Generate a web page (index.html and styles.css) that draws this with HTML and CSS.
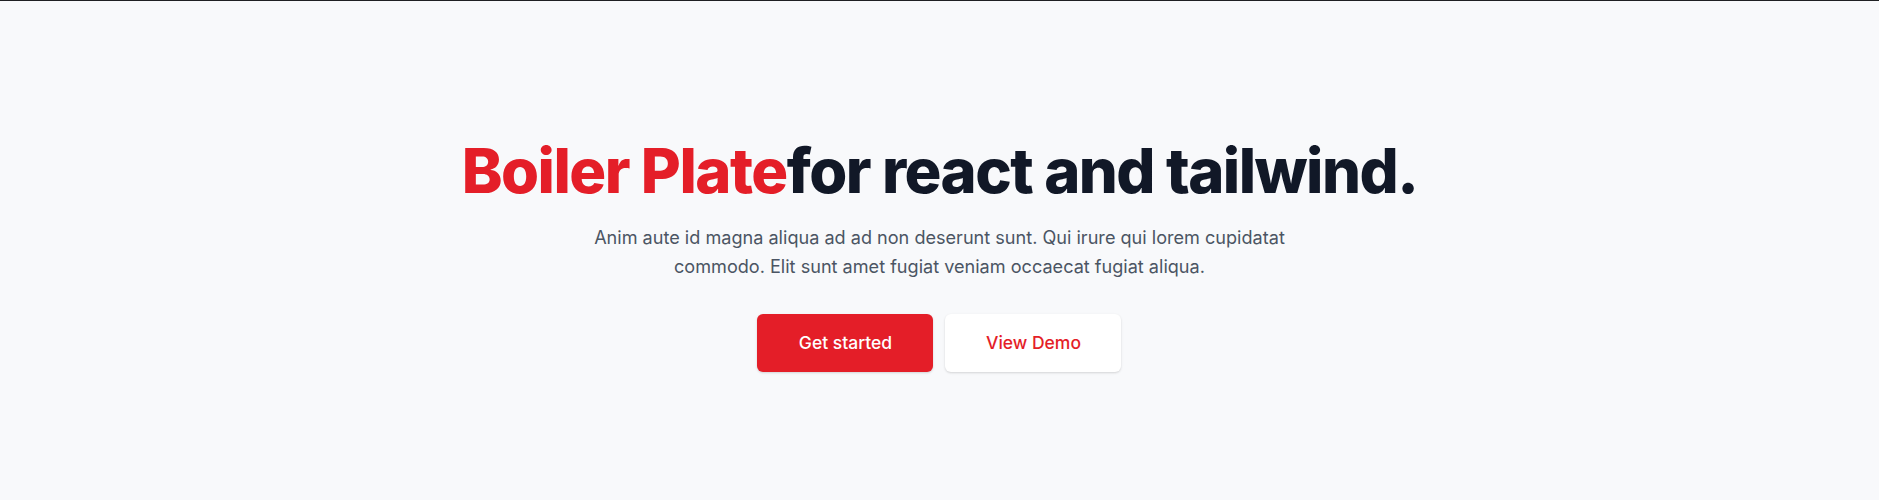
FILE: index.html
```html
<!DOCTYPE html>
<html lang="en">
<head>
<meta charset="utf-8">
<title>Boiler Plate</title>
<link rel="stylesheet" href="styles.css">
</head>
<body>
<main class="hero">
  <div class="hero-inner">
    <h1 class="title"><span class="accent">Boiler Plate</span>for react and tailwind.</h1>
    <p class="lead">Anim aute id magna aliqua ad ad non deserunt sunt. Qui irure qui lorem cupidatat commodo. Elit sunt amet fugiat veniam occaecat fugiat aliqua.</p>
    <div class="actions">
      <a class="btn btn-primary" href="#">Get started</a>
      <a class="btn btn-secondary" href="#">View Demo</a>
    </div>
  </div>
</main>
</body>
</html>
```
FILE: styles.css
```css
* { box-sizing: border-box; }
html, body { margin: 0; padding: 0; }
body {
  font-family: Inter, "Noto Sans", sans-serif;
  background: #f8f9fb;
  border-top: 1px solid #1f2023;
}
.hero {
  height: 499px;
  display: flex;
  align-items: center;
  justify-content: center;
}
.hero-inner {
  display: flex;
  flex-direction: column;
  align-items: center;
  text-align: center;
  padding-top: 10px;
}
.title {
  margin: 0;
  font-size: 61.5px;
  line-height: 1;
  font-weight: 800;
  letter-spacing: -0.025em;
  color: #111827;
}
.accent { color: #e41e28; }
.lead {
  margin: 22px 0 0;
  max-width: 710px;
  font-size: 18.1px;
  line-height: 29.25px;
  color: #4b5563;
}
.actions {
  margin-top: 32px;
  display: flex;
  gap: 12px;
}
.btn {
  display: flex;
  align-items: center;
  justify-content: center;
  width: 176px;
  height: 58px;
  border-radius: 6px;
  font-size: 17.5px;
  font-weight: 500;
  text-decoration: none;
  box-shadow: 0 1px 3px rgba(0,0,0,0.1), 0 1px 2px rgba(0,0,0,0.06);
}
.btn-primary { background: #e41e28; color: #fff; }
.btn-secondary { background: #fff; color: #e41e28; }
```
